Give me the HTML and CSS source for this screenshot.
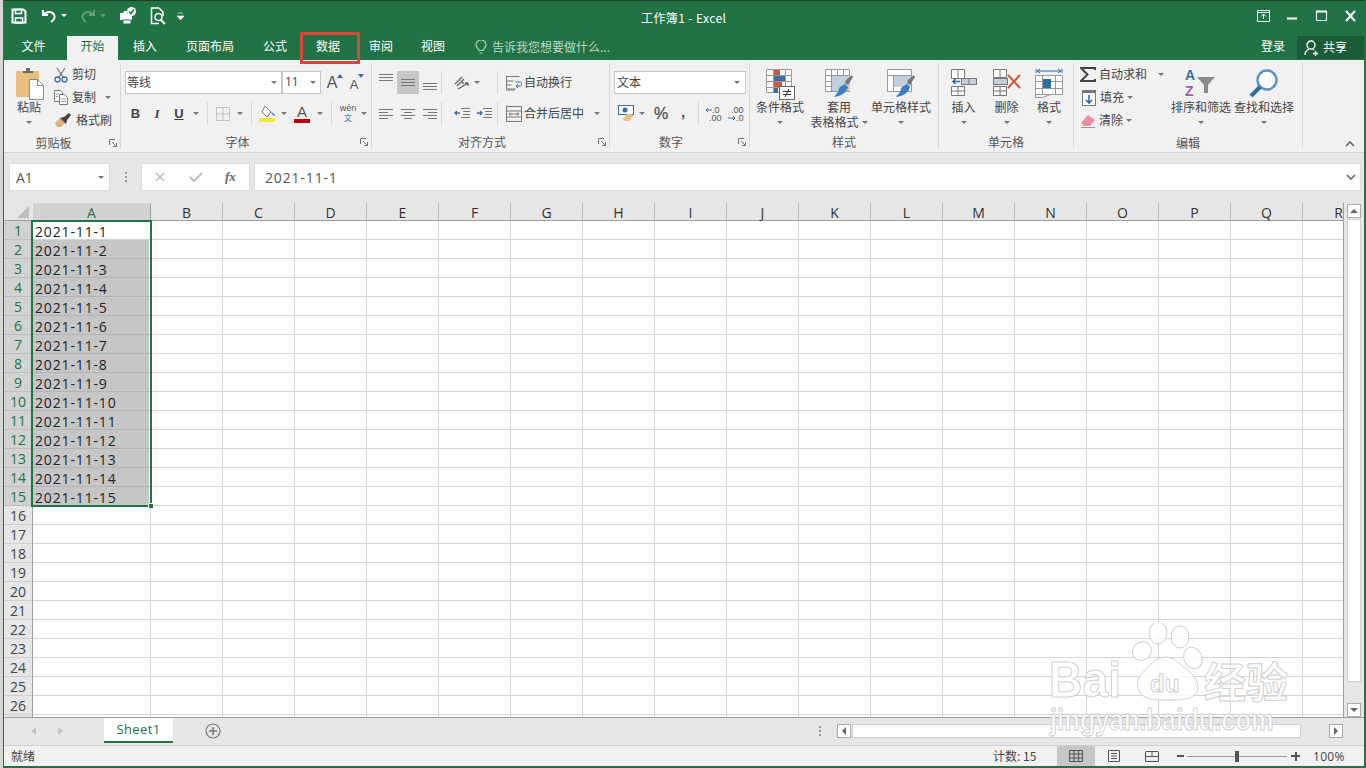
FILE: index.html
```html
<!DOCTYPE html>
<html lang="zh-CN">
<head>
<meta charset="utf-8">
<title>工作簿1 - Excel</title>
<link rel="stylesheet" href="styles.css">
</head>
<body>
<div class="window">
<div class="main">

<header class="titlebar">
  <div class="qat">
    <svg class="q1" width="16" height="16" viewBox="0 0 16 16"><path d="M1.5 1.5h11l2 2v11h-13z" fill="none" stroke="#fff" stroke-width="2"/><path d="M4.5 1.5h6v4h-6zM4.5 10h7v5h-7z" fill="none" stroke="#fff" stroke-width="1.5"/></svg>
    <svg class="q2" width="16" height="16" viewBox="0 0 16 16"><path d="M2 2v5h5M2.500 7C5 3 11 3 13 6.500c1.500 3-.5 6-3 7.500" fill="none" stroke="#fff" stroke-width="2"/></svg>
    <i class="car white q3"></i>
    <svg class="q4" width="16" height="16" viewBox="0 0 16 16"><path d="M14 2v5H9M13.500 7C11 3 5 3 3 6.500c-1.500 3 .5 6 3 7.500" fill="none" stroke="#5f9f7d" stroke-width="2"/></svg>
    <i class="car dim q5"></i>
    <svg class="q6" width="18" height="18" viewBox="0 0 18 18"><path d="M1 6h3l1-2h3v3h5v6H1z" fill="#fff"/><path d="M4 13h8v4H4z" fill="#fff" stroke="#217346"/><circle cx="12.500" cy="4.500" r="4.500" fill="#fff"/><path d="M10 4.500l2 2 3-4" fill="none" stroke="#217346" stroke-width="1.500"/></svg>
    <svg class="q7" width="16" height="18" viewBox="0 0 16 18"><path d="M9 1H1.500v15.500H9M9 1l4 4v4" fill="none" stroke="#fff" stroke-width="1.500"/><circle cx="8.500" cy="10" r="3.500" fill="none" stroke="#fff" stroke-width="1.500"/><path d="M11 13l4 4" stroke="#fff" stroke-width="2"/></svg>
    <svg class="q8" width="7" height="8" viewBox="0 0 7 8"><path d="M1 1h5M0 4h7L3.500 8z" fill="#fff" stroke="#fff" stroke-width=".6"/></svg>
  </div>
  <div class="doc-title">工作簿1 - Excel</div>
  <div class="winctl">
    <svg width="13" height="12" viewBox="0 0 13 12"><path d="M.5.500h12v11H.5zM.5 2.500h12" fill="none" stroke="#fff"/><path d="M6.500 9V4.500M4 6.500L6.500 4 9 6.500" fill="none" stroke="#fff"/></svg>
    <svg width="10" height="12" viewBox="0 0 10 12"><path d="M0 8.500h10" stroke="#fff" stroke-width="2"/></svg>
    <svg width="11" height="12" viewBox="0 0 11 12"><path d="M.5 1.500h10v9H.5z" fill="none" stroke="#fff"/><path d="M0 1.500h11" stroke="#fff" stroke-width="2"/></svg>
    <svg width="11" height="12" viewBox="0 0 11 12"><path d="M1 1l9 10M10 1L1 11" stroke="#fff" stroke-width="2"/></svg>
  </div>
</header>

<nav class="tabs">
  <div class="tab t58">文件</div>
  <div class="tab active">开始</div>
  <div class="tab t54">插入</div>
  <div class="tab t76">页面布局</div>
  <div class="tab t54">公式</div>
  <div class="tab t52 marked">数据<span class="redbox"></span></div>
  <div class="tab t54">审阅</div>
  <div class="tab t50">视图</div>
  <div class="tellme">
    <svg width="12" height="15" viewBox="0 0 12 15"><path d="M4 10.500C3.500 8.500 1 7.500 1 5a5 5 0 0 1 10 0c0 2.500-2.500 3.500-3 5.500zM4.500 13h3" fill="none" stroke="#a9d0bb" stroke-width="1.200"/></svg>
    <span>告诉我您想要做什么...</span>
  </div>
  <div class="login">登录</div>
  <div class="share">
    <svg width="15" height="16" viewBox="0 0 15 16"><circle cx="7" cy="5" r="4" fill="none" stroke="#fff" stroke-width="1.300"/><path d="M1 15c0-3 2-5 4-6M9 9l1 1M9 13.500h5M11.500 11v5" fill="none" stroke="#fff" stroke-width="1.300"/></svg>
    <span>共享</span>
  </div>
</nav>

<section class="ribbon">
  <div class="group g1">
    <div class="gbody">
      <div class="big w50">
        <div class="bigicon">
          <svg width="29" height="32" viewBox="0 0 29 32"><rect x="1" y="3" width="23" height="26" rx="1" fill="#e9bf80"/><path d="M8 5V3h3V0h4v3h3v2z" fill="#6b6b6b"/><path d="M14.500 11.500h8l6 6v14h-14z" fill="#fff" stroke="#8a8a8a"/><path d="M22.500 11.500v6h6" fill="none" stroke="#8a8a8a"/></svg>
        </div>
        <div class="bl">粘贴</div>
        <div class="bl"><i class="car"></i></div>
      </div>
      <div class="col r1">
        <div class="row"><svg width="14" height="16" viewBox="0 0 14 16"><path d="M3 1l6 9M11 1L5 10" stroke="#777" stroke-width="1.300"/><circle cx="3.500" cy="12.500" r="2.500" fill="none" stroke="#3a6ea5" stroke-width="1.300"/><circle cx="10.500" cy="12.500" r="2.500" fill="none" stroke="#3a6ea5" stroke-width="1.300"/></svg><span>剪切</span></div>
        <div class="row"><svg width="14" height="15" viewBox="0 0 14 15"><path d="M.5.500h6l2 2v9H.5z" fill="#fff" stroke="#777"/><path d="M5.500 4.500h5l3 3v7h-8z" fill="#fff" stroke="#777"/><path d="M2 4h3M2 6.500h2M7 9h5M7 11.500h5" stroke="#999"/></svg><span>复制</span><i class="car ca"></i></div>
        <div class="row"><svg width="18" height="15" viewBox="0 0 18 15"><path d="M1 10l5-5 5 5-4 4H3z" fill="#d9b37a"/><path d="M6 5l4-1 5-4 2 2-4 5-1 4z" fill="#444"/></svg><span>格式刷</span></div>
      </div>
    </div>
    <div class="glabel"><span>剪贴板</span><b class="launch"><svg width="8" height="8" viewBox="0 0 8 8"><path d="M.5 6V.5H6M3 3l4.500 4.500M7.500 4v3.500H4" fill="none" stroke="#777"/></svg></b></div>
  </div>

  <div class="group g2">
    <div class="gbody stack">
      <div class="line1">
        <div class="select fontname"><span>等线</span><i class="car"></i></div>
        <div class="select fontsize"><span>11</span><i class="car"></i></div>
        <div class="btn w22 grow first"><span class="letter">A</span><svg width="6" height="4" viewBox="0 0 6 4"><path d="M0 4l3-4 3 4z" fill="#3a6ea5"/></svg></div>
        <div class="btn w22 grow small"><span class="letter">A</span><svg width="6" height="4" viewBox="0 0 6 4"><path d="M0 0l3 4 3-4z" fill="#3a6ea5"/></svg></div>
      </div>
      <div class="line2">
        <div class="btn w21 fb">B</div>
        <div class="btn w22 fi">I</div>
        <div class="btn w22 fu">U</div>
        <div class="btn w12"><i class="car"></i></div>
        <i class="vsep m4"></i>
        <div class="btn w22 ml4"><svg width="14" height="14" viewBox="0 0 14 14"><path d="M.5.500h13v13H.5zM7 .5v13M.5 7h13" fill="none" stroke="#999" stroke-dasharray="1 1"/></svg></div>
        <div class="btn w12"><i class="car"></i></div>
        <i class="vsep m4"></i>
        <div class="btn w22 ml4"><svg width="17" height="18" viewBox="0 0 17 18"><path d="M6 1l6 6-4 5-5-5z" fill="#fff" stroke="#777"/><path d="M12 7c2 1 4 2 4 4-2 0-3-2-4-4z" fill="#3a7fc4"/><rect y="13" width="16" height="4" fill="#f4e832"/></svg></div>
        <div class="btn w12"><i class="car"></i></div>
        <div class="btn w24 fcol"><span class="letter">A</span><i class="redbar"></i></div>
        <div class="btn w12"><i class="car"></i></div>
        <i class="vsep m4"></i>
        <div class="btn w26 wen"><span class="pin">wén</span><span class="han">文</span></div>
        <div class="btn w6"><i class="car"></i></div>
      </div>
    </div>
    <div class="glabel"><span>字体</span><b class="launch"><svg width="8" height="8" viewBox="0 0 8 8"><path d="M.5 6V.5H6M3 3l4.500 4.500M7.500 4v3.500H4" fill="none" stroke="#777"/></svg></b></div>
  </div>

  <div class="group g3">
    <div class="gbody stack">
      <div class="line1">
        <div class="btn w22 va1"><svg width="14" height="8" viewBox="0 0 14 8"><path d="M0 .5h14M0 3.500h14M0 6.500h14" stroke="#777"/></svg></div>
        <div class="btn w22 pressed"><svg width="14" height="8" viewBox="0 0 14 8"><path d="M0 .5h14M0 3.500h14M0 6.500h14" stroke="#777"/></svg></div>
        <div class="btn w22 va3"><svg width="14" height="8" viewBox="0 0 14 8"><path d="M0 .5h14M0 3.500h14M0 6.500h14" stroke="#777"/></svg></div>
        <i class="vsep"></i>
        <div class="btn w22 ml9"><svg width="16" height="14" viewBox="0 0 16 14"><path d="M1 8l7-7M3 10l7-7M7 5l3 3M14 7L4 13M14 7h-3M14 7v3" fill="none" stroke="#666" stroke-width="1.300"/></svg></div>
        <div class="btn w12 nudge"><i class="car"></i></div>
        <i class="vsep ml12"></i>
        <div class="btn wide ml7"><svg width="17" height="16" viewBox="0 0 17 16"><path d="M.5 1.500h13M.5 6h7M.5 10h5M.5 14h9" stroke="#777" fill="none"/><path d="M.5 1v14h8" stroke="#777" fill="none"/><path d="M10 7h4c2 0 2 4 0 4h-3M12 9l-2 2 2 2" fill="none" stroke="#3a6ea5"/></svg><span>自动换行</span></div>
      </div>
      <div class="line2">
        <div class="btn w22"><svg width="14" height="10" viewBox="0 0 14 10"><path d="M0 .5h14M0 3.500h9M0 6.500h14M0 9.500h9" stroke="#777"/></svg></div>
        <div class="btn w22"><svg width="14" height="10" viewBox="0 0 14 10"><path d="M0 .5h14M3 3.500h8M0 6.500h14M3 9.500h8" stroke="#777"/></svg></div>
        <div class="btn w22"><svg width="14" height="10" viewBox="0 0 14 10"><path d="M0 .5h14M5 3.500h9M0 6.500h14M5 9.500h9" stroke="#777"/></svg></div>
        <i class="vsep"></i>
        <div class="btn w22 ml9"><svg width="16" height="12" viewBox="0 0 16 12"><path d="M7 .5h9M9 3.500h7M9 6.500h7M7 9.500h9" stroke="#777"/><path d="M6 5H1M3 3L1 5l2 2" fill="none" stroke="#3a6ea5" stroke-width="1.300"/></svg></div>
        <div class="btn w22"><svg width="16" height="12" viewBox="0 0 16 12"><path d="M7 .5h9M9 3.500h7M9 6.500h7M7 9.500h9" stroke="#777"/><path d="M1 5h5M4 3l2 2-2 2" fill="none" stroke="#3a6ea5" stroke-width="1.300"/></svg></div>
        <i class="vsep ml2"></i>
        <div class="btn wide ml7"><svg width="17" height="16" viewBox="0 0 17 16"><path d="M.5.500h15v15H.5zM.5 5h15M.5 11h15" fill="none" stroke="#777"/><path d="M3 8h10M5 6.500L3 8l2 1.500M11 6.500L13 8l-2 1.500" fill="none" stroke="#777"/></svg><span>合并后居中</span></div>
        <div class="btn w12 ml8"><i class="car"></i></div>
      </div>
    </div>
    <div class="glabel"><span>对齐方式</span><b class="launch"><svg width="8" height="8" viewBox="0 0 8 8"><path d="M.5 6V.5H6M3 3l4.500 4.500M7.500 4v3.500H4" fill="none" stroke="#777"/></svg></b></div>
  </div>

  <div class="group g4">
    <div class="gbody stack">
      <div class="line1">
        <div class="select numfmt"><span>文本</span><i class="car"></i></div>
      </div>
      <div class="line2">
        <div class="btn w22 ml8b"><svg width="17" height="17" viewBox="0 0 17 17"><rect x=".5" y=".5" width="15" height="9" fill="#fff" stroke="#3a6ea5"/><circle cx="7" cy="5" r="2.500" fill="#3a6ea5"/><ellipse cx="11" cy="11" rx="4" ry="2" fill="#e9bf80"/><ellipse cx="9" cy="14" rx="4" ry="2" fill="#e9bf80"/></svg></div>
        <div class="btn w12 tight"><i class="car"></i></div>
        <div class="btn w22 pct">%</div>
        <div class="btn w22 comma">,</div>
        <i class="vsep ml4"></i>
        <div class="btn w22 ml4"><svg width="18" height="16" viewBox="0 0 18 16"><text x="7" y="7" class="dec">.0</text><text x="4" y="15" class="dec">.00</text><path d="M7 4H1M3 2L1 4l2 2" fill="none" stroke="#3a6ea5"/></svg></div>
        <div class="btn w22"><svg width="18" height="16" viewBox="0 0 18 16"><text x="4" y="7" class="dec">.00</text><text x="9" y="15" class="dec">.0</text><path d="M1 12h7M6 10l2 2-2 2" fill="none" stroke="#3a6ea5"/></svg></div>
      </div>
    </div>
    <div class="glabel"><span>数字</span><b class="launch"><svg width="8" height="8" viewBox="0 0 8 8"><path d="M.5 6V.5H6M3 3l4.500 4.500M7.500 4v3.500H4" fill="none" stroke="#777"/></svg></b></div>
  </div>

  <div class="group g5">
    <div class="gbody">
      <div class="big w60">
        <div class="bigicon"><svg width="30" height="32" viewBox="0 0 30 32"><path d="M1.500 1.500h25v23h-25zM1.500 7.500h25M1.500 13.500h25M1.500 19.500h25M8.500 1.500v23M20.500 1.500v23" fill="#fff" stroke="#999"/><rect x="9" y="2" width="6" height="5" fill="#d1583c"/><rect x="9" y="8" width="11" height="5" fill="#3a6ea5"/><rect x="9" y="14" width="8" height="5" fill="#d1583c"/><rect x="9" y="20" width="4" height="5" fill="#3a6ea5"/><rect x="14.500" y="18.500" width="15" height="13" fill="#fff" stroke="#666"/><path d="M18 23.500h8M18 26.500h8M24 21l-4 8" stroke="#333"/></svg></div>
        <div class="bl">条件格式</div>
        <div class="bl"><i class="car"></i></div>
      </div>
      <div class="big w58">
        <div class="bigicon"><svg width="30" height="32" viewBox="0 0 30 32"><path d="M1.500 1.500h24v22h-24zM1.500 7.500h24M1.500 13.500h24M1.500 18.500h24M7.500 1.500v22M13.500 1.500v22M19.500 1.500v22" fill="#fff" stroke="#999"/><rect x="8" y="8" width="18" height="15" fill="#c3cedd"/><path d="M22 12l6-5 1 2-5 8-3-2z" fill="#777"/><path d="M21 16l3 3c-1 5-6 9-14 10 2-3 5-5 5-9 2-2 4-3 6-4z" fill="#3a7fc4"/></svg></div>
        <div class="bl">套用</div>
        <div class="bl nw">表格格式<i class="car ml3"></i></div>
      </div>
      <div class="big w66">
        <div class="bigicon"><svg width="30" height="32" viewBox="0 0 30 32"><path d="M1.500 1.500h24v22h-24zM1.500 7.500h24M7.500 7.500v16" fill="#fff" stroke="#999"/><rect x="8" y="8" width="17" height="11" fill="#c3cedd"/><path d="M22 12l6-5 1 2-5 8-3-2z" fill="#777"/><path d="M21 16l3 3c-1 5-6 9-14 10 2-3 5-5 5-9 2-2 4-3 6-4z" fill="#3a7fc4"/></svg></div>
        <div class="bl">单元格样式</div>
        <div class="bl"><i class="car"></i></div>
      </div>
    </div>
    <div class="glabel"><span>样式</span></div>
  </div>

  <div class="group g6">
    <div class="gbody">
      <div class="big w43">
        <div class="bigicon"><svg width="28" height="28" viewBox="0 0 28 28"><path d="M1.500 1.500h13v9h-13zM8 1.500v9M1.500 18.500h13v9h-13zM8 18.500v9M1.500 23h13" fill="#fff" stroke="#777"/><rect x="11.500" y="10.500" width="15" height="6" fill="#c3cedd" stroke="#777"/><path d="M19 10.500v6" stroke="#777"/><path d="M10 13.500H3M5.500 11L3 13.500 5.500 16" fill="none" stroke="#2f6da8" stroke-width="1.600"/></svg></div>
        <div class="bl">插入</div>
        <div class="bl"><i class="car"></i></div>
      </div>
      <div class="big w43">
        <div class="bigicon"><svg width="30" height="28" viewBox="0 0 30 28"><path d="M1.500 1.500h13v8h-13zM8 1.500v8M1.500 18.500h13v9h-13zM8 18.500v9M1.500 23h13" fill="#fff" stroke="#777"/><rect x="1.500" y="10.500" width="14" height="6" fill="#c3cedd" stroke="#777"/><path d="M16 7l12 13M28 7L16 20" stroke="#d1583c" stroke-width="2"/></svg></div>
        <div class="bl">删除</div>
        <div class="bl"><i class="car"></i></div>
      </div>
      <div class="big w42">
        <div class="bigicon"><svg width="28" height="32" viewBox="0 0 28 32"><path d="M1 1v4M27 1v4M2 3h24M5 1L2 3l3 2M23 1l3 2-3 2" fill="none" stroke="#2f6da8"/><path d="M.5 7.500h27v19H.5zM.5 13.500h27M.5 20.500h27M7.500 7.500v19M20.500 7.500v19" fill="#fff" stroke="#999"/><rect x="8" y="11" width="8" height="9" fill="#2f6da8"/><path d="M.5 26.500v3h7l8-3" fill="none" stroke="#999"/></svg></div>
        <div class="bl">格式</div>
        <div class="bl"><i class="car"></i></div>
      </div>
    </div>
    <div class="glabel"><span>单元格</span></div>
  </div>

  <div class="group g7">
    <div class="gbody">
      <div class="col r7">
        <div class="row"><svg width="16" height="15" viewBox="0 0 16 15"><path d="M15 3V1H1l6.500 6.500L1 14h14v-2" fill="none" stroke="#444" stroke-width="2"/></svg><span>自动求和</span><i class="car ca2"></i></div>
        <div class="row"><svg class="fillic" width="14" height="16" viewBox="0 0 14 16"><rect x=".5" y=".5" width="13" height="15" fill="#fff" stroke="#777"/><rect width="14" height="3" fill="#777"/><path d="M7 5v8M4 10l3 3 3-3" fill="none" stroke="#2f6da8" stroke-width="1.600"/></svg><span>填充</span><i class="car"></i></div>
        <div class="row"><svg width="16" height="14" viewBox="0 0 16 14"><path d="M1 9l7-8 7 5-5 6H4z" fill="#e88ea0"/><path d="M1 13.500h14" stroke="#999"/></svg><span>清除</span><i class="car"></i></div>
      </div>
      <div class="big w62">
        <div class="bigicon"><svg width="32" height="30" viewBox="0 0 32 30"><text x="0" y="12" class="az a">A</text><text x="0" y="28" class="az z">Z</text><path d="M12 9h18l-7 8v8h-4v-8z" fill="#8a8a8a"/></svg></div>
        <div class="bl nw">排序和筛选</div>
        <div class="bl"><i class="car"></i></div>
      </div>
      <div class="big w64">
        <div class="bigicon"><svg width="30" height="32" viewBox="0 0 30 32"><circle cx="18" cy="12" r="9.500" fill="#fff" stroke="#5f8fc0" stroke-width="2.400"/><path d="M11 19L2 28" stroke="#2f6da8" stroke-width="4"/></svg></div>
        <div class="bl nw">查找和选择</div>
        <div class="bl"><i class="car"></i></div>
      </div>
    </div>
    <div class="glabel"><span>编辑</span></div>
  </div>

  <div class="collapse"><svg width="10" height="6" viewBox="0 0 10 6"><path d="M1 5l4-4 4 4" fill="none" stroke="#666" stroke-width="1.600"/></svg></div>
</section>

<section class="formula">
  <div class="namebox"><span>A1</span><i class="car"></i></div>
  <div class="fdots"><i></i><i></i><i></i></div>
  <div class="fbtns">
    <svg width="12" height="12" viewBox="0 0 12 12"><path d="M2 2l8 8M10 2l-8 8" stroke="#bdbdbd" stroke-width="1.500"/></svg>
    <svg width="14" height="12" viewBox="0 0 14 12"><path d="M1 6l4 4 8-8" fill="none" stroke="#bdbdbd" stroke-width="2"/></svg>
    <span class="fx">fx</span>
  </div>
  <div class="finput"><span>2021-11-1</span><svg width="10" height="6" viewBox="0 0 10 6"><path d="M1 1l4 4 4-4" fill="none" stroke="#666" stroke-width="1.600"/></svg></div>
</section>

<section class="sheet">
  <div class="gridwrap">
    <div class="colhead">
      <div class="corner"><i></i></div>
      <div class="ch sel">A</div>
      <div class="ch">B</div><div class="ch">C</div><div class="ch">D</div><div class="ch">E</div><div class="ch">F</div><div class="ch">G</div><div class="ch">H</div><div class="ch">I</div><div class="ch">J</div><div class="ch">K</div><div class="ch">L</div><div class="ch">M</div><div class="ch">N</div><div class="ch">O</div><div class="ch">P</div><div class="ch">Q</div><div class="ch">R</div>
    </div>
    <div class="gridbody">
      <div class="rowhead">
        <div class="rh sel">1</div><div class="rh sel">2</div><div class="rh sel">3</div><div class="rh sel">4</div><div class="rh sel">5</div><div class="rh sel">6</div><div class="rh sel">7</div><div class="rh sel">8</div><div class="rh sel">9</div><div class="rh sel">10</div><div class="rh sel">11</div><div class="rh sel">12</div><div class="rh sel">13</div><div class="rh sel">14</div><div class="rh sel">15</div>
        <div class="rh">16</div><div class="rh">17</div><div class="rh">18</div><div class="rh">19</div><div class="rh">20</div><div class="rh">21</div><div class="rh">22</div><div class="rh">23</div><div class="rh">24</div><div class="rh">25</div><div class="rh">26</div>
      </div>
      <div class="cola">
        <div class="cell">2021-11-1</div>
        <div class="cell on">2021-11-2</div><div class="cell on">2021-11-3</div><div class="cell on">2021-11-4</div><div class="cell on">2021-11-5</div><div class="cell on">2021-11-6</div><div class="cell on">2021-11-7</div><div class="cell on">2021-11-8</div><div class="cell on">2021-11-9</div><div class="cell on">2021-11-10</div><div class="cell on">2021-11-11</div><div class="cell on">2021-11-12</div><div class="cell on">2021-11-13</div><div class="cell on">2021-11-14</div><div class="cell on">2021-11-15</div>
      </div>
      <div class="rest"></div>
      <div class="selection"><i></i></div>
    </div>
  </div>
  <div class="vscroll">
    <div class="sbtn"><i class="up"></i></div>
    <div class="vthumb"></div>
    <div class="sbtn"><i class="down"></i></div>
  </div>
</section>

<section class="tabbar">
  <div class="navs">
    <svg width="5" height="8" viewBox="0 0 5 8"><path d="M5 0L0 4l5 4z" fill="#c2c2c2"/></svg>
    <svg width="5" height="8" viewBox="0 0 5 8"><path d="M0 0l5 4-5 4z" fill="#c2c2c2"/></svg>
  </div>
  <div class="sheettab">Sheet1</div>
  <div class="addsheet"><svg width="16" height="16" viewBox="0 0 16 16"><circle cx="8" cy="8" r="7" fill="none" stroke="#777" stroke-width="1.200"/><path d="M8 4v8M4 8h8" stroke="#777" stroke-width="1.600"/></svg></div>
  <div class="hdots"><i></i><i></i><i></i></div>
  <div class="hscroll">
    <div class="sbtn h"><i class="left"></i></div>
    <div class="hthumb"></div>
    <div class="sbtn h"><i class="right"></i></div>
  </div>
</section>

<footer class="status">
  <span class="ready">就绪</span>
  <span class="count">计数: 15</span>
  <div class="view on"><svg width="14" height="12" viewBox="0 0 14 12"><path d="M.5.500h13v11H.5zM.5 4h13M.5 8h13M5 .5v11M9.500.5v11" fill="none" stroke="#555"/></svg></div>
  <div class="view"><svg width="12" height="12" viewBox="0 0 12 12"><path d="M.5.500h11v11H.5zM3 3.500h6M3 6h6M3 8.500h6" fill="none" stroke="#555"/></svg></div>
  <div class="view"><svg width="14" height="11" viewBox="0 0 14 11"><path d="M.5 1v9.500h13V1M.5.500h13M.5 5.500h13M7 .5v5" fill="none" stroke="#555"/></svg></div>
  <div class="zoombar">
    <i class="zm"></i>
    <div class="slider"><i></i></div>
    <i class="zp"></i>
  </div>
  <span class="pctlabel">100%</span>
</footer>

<div class="watermark">
  <svg width="250" height="120" viewBox="0 0 250 120">
    <g class="wm">
      <ellipse cx="113" cy="10" rx="9" ry="11"/>
      <ellipse cx="135" cy="14" rx="9" ry="11"/>
      <ellipse cx="97" cy="28" rx="10" ry="9" transform="rotate(-35 97 28)"/>
      <ellipse cx="148" cy="35" rx="9" ry="11" transform="rotate(-25 148 35)"/>
      <path d="M94 68c-6-12 6-20 12-27 8-9 20-9 28-1 6 6 19 12 19 24 0 10-10 13-26 13-14 0-28 1-33-9z"/>
      <text x="4" y="74" class="wm-big" textLength="72" lengthAdjust="spacingAndGlyphs">Bai</text>
      <text x="105" y="69" class="wm-du">du</text>
      <text x="159" y="75" class="wm-cn">经验</text>
      <text class="wm-url" transform="translate(5 107) scale(.85 1)">jingyan.baidu.com</text>
    </g>
  </svg>
</div>

</div>
</div>
</body>
</html>
```

FILE: styles.css
```css
* { box-sizing: border-box; }
html, body { margin: 0; padding: 0; }
body { width: 1366px; height: 768px; overflow: hidden; background: #d3d8d5; font: 12px/16px "Noto Sans CJK SC", "Liberation Sans", sans-serif; color: #444; }
svg { display: block; flex: none; }
i { display: block; }

.window { width: 1366px; height: 768px; padding-left: 3px; }
.main { position: relative; width: 1363px; height: 768px; display: flex; flex-direction: column; background: #e6e6e6; border-left: 1px solid #217346; border-right: 2px solid #217346; border-bottom: 2px solid #217346; }

/* title */
.titlebar { height: 36px; flex: none; display: flex; background: #217346; border-top: 1px solid #1d3b2b; position: relative; color: #fff; }
.qat { display: flex; align-items: center; height: 29px; padding-left: 7px; }
.q2 { margin-left: 14px; }
.q3 { margin-left: 4px; }
.q4 { margin-left: 13px; }
.q5 { margin-left: 4px; }
.q6 { margin-left: 13px; }
.q7 { margin-left: 13px; }
.q8 { margin-left: 11px; }
.doc-title { position: absolute; left: 637px; top: 9px; line-height: 16px; color: #fff; font-size: 12px; letter-spacing: .4px; }
.winctl { margin-left: auto; display: flex; align-items: center; gap: 18px; height: 30px; padding-right: 8px; }
.winctl svg:nth-child(2) { margin-left: -1px; margin-right: 1px; }

/* tabs */
.tabs { height: 24px; flex: none; display: flex; background: #217346; color: #fff; }
.tab { height: 24px; line-height: 20px; text-align: center; flex: none; position: relative; }
.t58 { width: 59px; margin-right: 4px; }
.t54 { width: 54px; }
.t76 { width: 76px; }
.t52 { width: 52px; }
.t50 { width: 50px; }
.active { width: 51px; background: #f1f1f1; color: #217346; }
.redbox { position: absolute; left: -2px; top: -4px; width: 60px; height: 32px; border: 3px solid #d8463e; }
.tellme { display: flex; align-items: center; gap: 5px; margin-left: 17px; height: 22px; color: #bcd9c9; }
.login { margin-left: auto; width: 28px; line-height: 20px; }
.share { margin-left: 8px; width: 67px; height: 23px; background: #1a5c38; display: flex; align-items: center; gap: 4px; padding-left: 7px; }
.share span { padding-bottom: 2px; }

/* ribbon */
.ribbon { height: 93px; flex: none; display: flex; background: #f1f1f1; border-bottom: 1px solid #d2d2d2; }
.group { margin: 3px 0 4px; border-right: 1px solid #d9d9d9; display: flex; flex-direction: column; flex: none; }
.g1 { width: 117px; }
.g2 { width: 251px; }
.g3 { width: 238px; }
.g4 { width: 140px; }
.g5 { width: 189px; }
.g6 { width: 135px; }
.g7 { width: 229px; }
.gbody { height: 69px; display: flex; }
.stack { flex-direction: column; padding-top: 8px; }
.glabel { height: 17px; padding-top: 3px; line-height: 16px; display: flex; color: #555; }
.glabel span { flex: 1; text-align: center; }
.group .launch { width: 17px; flex: none; display: flex; justify-content: flex-end; padding: 4px 3px 0 0; font-weight: normal; }

.big { display: flex; flex-direction: column; align-items: center; flex: none; padding-top: 5px; }
.bigicon { height: 32px; display: flex; align-items: flex-start; justify-content: center; }
.bl { height: 15px; line-height: 13px; padding-bottom: 2px; display: flex; align-items: center; justify-content: center; white-space: nowrap; }
.bl .car { margin-top: 2px; }
.w42 { width: 42px; }
.w43 { width: 43px; }
.w50 { width: 50px; }
.w58 { width: 58px; }
.w60 { width: 60px; }
.w62 { width: 62px; }
.w64 { width: 64px; }
.w66 { width: 66px; }
.g6 .gbody { padding-left: 3px; }

.col { display: flex; flex-direction: column; flex: none; }
.row { height: 23px; display: flex; align-items: center; gap: 4px; white-space: nowrap; }
.row span { padding-bottom: 2px; }
.r1 { width: 66px; }
.g7 .gbody { padding-left: 6px; }
.r7 { width: 90px; }
.r7 .row { gap: 3px; }
.ca { margin-left: 5px; }
.ca2 { margin-left: 8px; }
.fillic { margin: 0 1px 0 2px; }
.ml3 { margin-left: 3px; }

.car { width: 0; height: 0; border-top: 3px solid #777; border-left: 3px solid transparent; border-right: 3px solid transparent; flex: none; }
.car.white { border-top-color: #fff; }
.car.dim { border-top-color: #5f9f7d; }

.line1, .line2 { height: 23px; display: flex; align-items: center; flex: none; }
.line2 { margin-top: 8px; }
.g2 .line1, .g2 .line2 { padding-left: 4px; }
.g3 .line1, .g3 .line2 { padding-left: 3px; }
.g4 .line1 { padding-left: 4px; }

.select { height: 23px; background: #fff; border: 1px solid #c6c6c6; display: flex; align-items: center; justify-content: space-between; padding: 0 4px 0 1px; }
.select span { padding-bottom: 2px; }
.fontname { width: 157px; }
.fontsize { width: 39px; padding-left: 2px; font-family: "Open Sans", sans-serif; }
.numfmt { width: 132px; padding-left: 2px; padding-right: 5px; }

.btn { height: 23px; display: flex; align-items: center; justify-content: center; flex: none; }
.w6 { width: 6px; }
.w12 { width: 12px; }
.w21 { width: 21px; }
.w22 { width: 22px; }
.w24 { width: 24px; }
.w26 { width: 26px; }
.wide { gap: 1px; justify-content: flex-start; }
.wide span { padding-bottom: 2px; }
.ml2 { margin-left: 2px; }
.ml4 { margin-left: 4px; }
.ml7 { margin-left: 8px; }
.ml8 { margin-left: 7px; }
.ml8b { margin-left: 5px; }
.ml9 { margin-left: 9px; }
.ml12 { margin-left: 12px; }
.nudge { margin-left: -2px; margin-right: 2px; }
.tight { margin-left: -1px; margin-right: 2px; }
.vsep { width: 1px; height: 23px; background: #d9d9d9; flex: none; }
.m4 { margin-left: 5px; }
.pressed { background: #c6c6c6; }
.va1 svg { margin-top: -9px; }
.va3 svg { margin-top: 9px; }

.grow { align-items: flex-start; padding-top: 3px; }
.grow .letter { font: 16px/18px "Liberation Sans", sans-serif; color: #555; }
.grow.small .letter { font-size: 13px; padding-top: 2px; }
.first { margin-left: 3px; }
.fb { font: bold 13px "Liberation Sans", sans-serif; color: #444; }
.fi { font: italic bold 13px "Liberation Serif", serif; color: #444; }
.fu { font: bold 13px "Liberation Sans", sans-serif; color: #444; text-decoration: underline; }
.fcol { flex-direction: column; }
.fcol .letter { font: 15px/14px "Liberation Sans", sans-serif; color: #555; }
.redbar { width: 16px; height: 4px; background: #c00000; }
.wen { flex-direction: column; margin-left: 3px; padding-bottom: 3px; }
.pin { font: 9px/10px "Liberation Sans", sans-serif; color: #555; }
.han { font-size: 8px; line-height: 9px; color: #2f6da8; }
.pct { font: 16px "Liberation Sans", sans-serif; color: #555; -webkit-text-stroke: .3px #555; }
.comma { font: bold 15px "Liberation Sans", sans-serif; color: #555; padding-bottom: 5px; }
.dec { font: 9px "Liberation Sans", sans-serif; fill: #555; }
.az { font: bold 14px "Liberation Sans", sans-serif; }
.a { fill: #3a6ea5; }
.z { fill: #9c5ea8; }

.collapse { flex: 1; display: flex; justify-content: flex-end; align-items: flex-end; padding: 0 9px 5px 0; }

/* formula */
.formula { height: 50px; flex: none; display: flex; align-items: flex-start; padding: 10px 3px 0 5px; background: #e6e6e6; }
.namebox { width: 101px; height: 28px; background: #fff; border: 1px solid #dcdcdc; display: flex; align-items: center; justify-content: space-between; padding: 0 5px 0 6px; font: 14px "Open Sans", sans-serif; color: #555; }
.fdots { width: 31px; height: 28px; display: flex; flex-direction: column; align-items: center; justify-content: center; gap: 2px; }
.fdots i, .hdots i { width: 2px; height: 2px; background: #999; }
.fbtns { width: 109px; height: 28px; background: #fff; border: 1px solid #dcdcdc; display: flex; align-items: center; padding-left: 12px; gap: 23px; }
.fx { font: italic bold 13px "Liberation Serif", serif; color: #666; margin-left: -1px; }
.finput { flex: 1; margin-left: 4px; height: 28px; background: #fff; border: 1px solid #dcdcdc; display: flex; align-items: center; justify-content: space-between; padding: 0 4px 0 10px; font: 14px "Open Sans", sans-serif; color: #555; letter-spacing: .85px; }

/* sheet */
.sheet { height: 514px; flex: none; display: flex; }
.gridwrap { width: 1340px; flex: none; overflow: hidden; border-right: 1px solid #9f9f9f; }
.colhead { height: 18px; display: flex; background: #e6e6e6; border-bottom: 1px solid #9f9f9f; }
.corner { width: 29px; flex: none; display: flex; justify-content: flex-end; align-items: flex-end; padding: 0 4px 2px 0; }
.corner i { width: 0; height: 0; border-style: solid; border-width: 0 0 12px 12px; border-color: transparent transparent #c0c0c0 transparent; }
.ch { width: 72px; flex: none; text-align: center; font: 14px/20px "Open Sans", sans-serif; color: #333; border-right: 1px solid #bdbdbd; }
.ch.sel { width: 118px; background: #d2d2d2; color: #217346; border-right-color: #9f9f9f; }
.gridbody { position: relative; display: flex; height: 496px; background: #fff; }
.rowhead { width: 29px; flex: none; border-right: 1px solid #9f9f9f; background: #e6e6e6; }
.rh { height: 19px; text-align: center; font: 14px/20px "Open Sans", sans-serif; color: #444; border-bottom: 1px solid #cfcfcf; }
.rh.sel { background: #d2d2d2; color: #217346; border-bottom-color: #bdbdbd; }
.cola { width: 118px; flex: none; background-image: linear-gradient(to bottom, transparent 18px, #d4d4d4 18px), linear-gradient(to right, transparent 117px, #d4d4d4 117px); background-size: 118px 19px; }
.cell { height: 19px; padding-left: 2px; font: 14px/21px "Open Sans", sans-serif; color: #222; letter-spacing: .85px; }
.cell.on { background: #c6c6c6; margin-right: 2px; border-bottom: 1px solid #b3b3b3; }
.rest { flex: 1; background-image: linear-gradient(to bottom, transparent 18px, #d4d4d4 18px), linear-gradient(to right, transparent 71px, #d4d4d4 71px); background-size: 72px 19px; }
.selection { position: absolute; left: 27px; top: -1px; width: 121px; height: 287px; border: 2px solid #217346; }
.selection i { position: absolute; right: -4px; bottom: -4px; width: 6px; height: 6px; background: #217346; border: 1px solid #fff; }

.vscroll { width: 20px; flex: none; padding: 1px 3px 0 3px; display: flex; flex-direction: column; background: #e6e6e6; }
.sbtn { width: 14px; height: 14px; background: #fff; border: 1px solid #ababab; flex: none; display: flex; align-items: center; justify-content: center; }
.vthumb { height: 463px; background: #fff; margin: 1px 0 21px; border: 1px solid #cfcfcf; width: 14px; }
.up { width: 0; height: 0; border-bottom: 4px solid #666; border-left: 4px solid transparent; border-right: 4px solid transparent; }
.down { width: 0; height: 0; border-top: 4px solid #666; border-left: 4px solid transparent; border-right: 4px solid transparent; }
.left { width: 0; height: 0; border-right: 4px solid #666; border-top: 4px solid transparent; border-bottom: 4px solid transparent; }
.right { width: 0; height: 0; border-left: 4px solid #666; border-top: 4px solid transparent; border-bottom: 4px solid transparent; }

/* tabs */
.tabbar { height: 28px; flex: none; display: flex; background: #e6e6e6; border-top: 1px solid #9f9f9f; }
.navs { width: 100px; display: flex; align-items: center; gap: 22px; padding: 0 0 2px 27px; }
.sheettab { width: 69px; height: 25px; background: #fff; color: #217346; border-bottom: 2px solid #217346; text-align: center; font: 13px/23px "Open Sans", sans-serif; letter-spacing: .4px; }
.addsheet { margin-left: 32px; width: 16px; display: flex; align-items: center; padding-bottom: 2px; }
.hdots { margin-left: 598px; display: flex; flex-direction: column; justify-content: center; gap: 2px; padding-bottom: 2px; }
.hscroll { margin-left: 16px; width: 507px; display: flex; align-items: flex-start; padding-top: 6px; }
.hthumb { width: 449px; height: 14px; margin: 0 28px 0 1px; background: #fff; border: 1px solid #cfcfcf; }

/* status */
.status { height: 21px; flex: 1; display: flex; align-items: center; background: #f1f1f1; border-top: 1px solid #d0d0d0; }
.ready { margin-left: 7px; width: 982px; flex: none; }
.count { width: 64px; flex: none; font-size: 12px; white-space: nowrap; }
.view { width: 38px; height: 100%; display: flex; align-items: center; justify-content: center; flex: none; }
.view.on { background: #c6c6c6; }
.zoombar { margin-left: 6px; display: flex; align-items: center; width: 125px; flex: none; }
.zm { width: 7px; height: 2px; background: #555; }
.zp { width: 9px; height: 9px; background: linear-gradient(#555,#555) center/9px 2px no-repeat, linear-gradient(#555,#555) center/2px 9px no-repeat; }
.slider { width: 100px; margin: 0 4px 0 3px; height: 1px; background: #999; position: relative; }
.slider i { position: absolute; left: 48px; top: -5px; width: 4px; height: 11px; background: #555; }
.pctlabel { margin-left: 11px; font: 12px "Open Sans", sans-serif; color: #444; letter-spacing: .3px; }

/* watermark */
.watermark { position: absolute; left: 1041px; top: 623px; }
.wm { fill: #fff; fill-opacity: .82; stroke: #cfcfcf; stroke-width: 1; }
.wm-big { font: bold 50px "Liberation Sans", sans-serif; }
.wm-du { font: bold 24px "Liberation Sans", sans-serif; }
.wm-cn { font: bold 42px "Noto Sans CJK SC", sans-serif; }
.wm-url { font: bold 30px "Liberation Sans", sans-serif; }
```
